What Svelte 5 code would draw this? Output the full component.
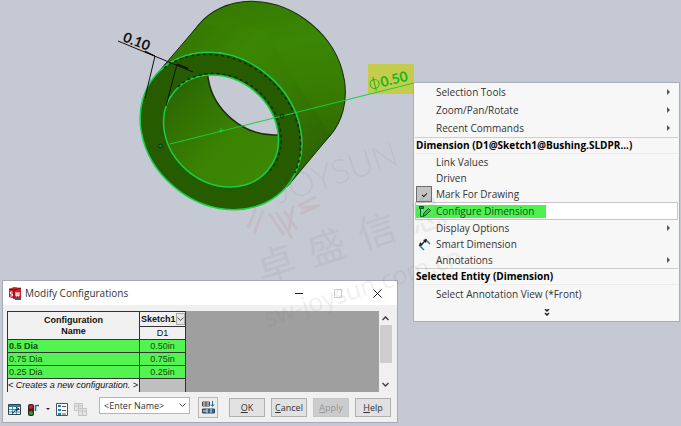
<script lang="ts">
  interface MenuItem {
    label: string;
    submenu?: boolean;
    icon?: 'configure' | 'smart';
    checkable?: boolean;
    active?: boolean;
  }

  const generalItems: MenuItem[] = [
    { label: 'Selection Tools', submenu: true },
    { label: 'Zoom/Pan/Rotate', submenu: true },
    { label: 'Recent Commands', submenu: true }
  ];

  const dimensionItems: MenuItem[] = [
    { label: 'Link Values' },
    { label: 'Driven' },
    { label: 'Mark For Drawing', checkable: true },
    { label: 'Configure Dimension', icon: 'configure', active: true },
    { label: 'Display Options', submenu: true },
    { label: 'Smart Dimension', icon: 'smart' },
    { label: 'Annotations', submenu: true }
  ];

  const configurations = [
    { name: '0.5 Dia', value: '0.50in', current: true },
    { name: '0.75 Dia', value: '0.75in', current: false },
    { name: '0.25 Dia', value: '0.25in', current: false }
  ];

  let markForDrawing = $state(true);
  let viewName = $state('enter');
</script>

{#snippet menuRow(item: MenuItem)}
  {#if item.checkable}
    <label class="menu-item">
      <span class="menu-icon"><input type="checkbox" bind:checked={markForDrawing} /></span>
      <span>{item.label}</span>
    </label>
  {:else}
    <button class="menu-item" class:active={item.active} role="menuitem">
      <span class="menu-target">
        <span class="menu-icon">
          {#if item.icon === 'configure'}
            <svg viewBox="0 0 13 13" width="13" height="13" aria-hidden="true">
              <path d="M1.500 1.500h4v2h-4z" fill="#2b6f8c" stroke="#0d4a3a" />
              <path d="M2.500 4v7.500h2" fill="none" stroke="#0d5a35" />
              <path d="M5 11.500l1-3.500 4.500-4.500 2 2L8 10z" fill="#3fc04f" stroke="#0a4a1c" />
            </svg>
          {:else if item.icon === 'smart'}
            <svg viewBox="0 0 13 13" width="13" height="13" aria-hidden="true">
              <path d="M1 7l5 5M7 1l5 5" stroke="#2b78ad" stroke-width="1.500" />
              <path d="M2.500 7.500l5-5" stroke="#222" stroke-width="1.500" />
              <path d="M1 8l1-4 3 3zM9 1L5 2l3 3z" fill="#222" />
            </svg>
          {/if}
        </span>
        <span>{item.label}</span>
      </span>
      {#if item.submenu}
        <svg class="submenu-arrow" viewBox="0 0 4 6" width="4" height="6" aria-hidden="true">
          <path d="M0 0l3 3-3 3z" fill="#555" />
        </svg>
      {/if}
    </button>
  {/if}
{/snippet}

<main class="viewport">
  <svg class="model" width="420" height="220" viewBox="0 0 420 220" role="img" aria-label="Bushing">
    <defs>
      <linearGradient id="outside" gradientUnits="userSpaceOnUse" x1="190" y1="40" x2="325" y2="145">
        <stop offset="0" stop-color="#357a02" />
        <stop offset="0.300" stop-color="#3b8603" />
        <stop offset="0.600" stop-color="#387d03" />
        <stop offset="1" stop-color="#2e6602" />
      </linearGradient>
      <linearGradient id="bore" gradientUnits="userSpaceOnUse" x1="165" y1="90" x2="260" y2="180">
        <stop offset="0" stop-color="#2b6502" />
        <stop offset="0.600" stop-color="#3a8203" />
        <stop offset="1" stop-color="#3d8704" />
      </linearGradient>
      <clipPath id="front-hole">
        <ellipse cx="221" cy="131" rx="61" ry="52" transform="rotate(40 221 131)" />
      </clipPath>
    </defs>

    <ellipse cx="264.500" cy="80" rx="86" ry="73" transform="rotate(40 264.500 80)" fill="url(#outside)" stroke="#1a2a10" />
    <path d="M155 76L199 24.500L264 30L330 135.500L287 187L221 131z" fill="url(#outside)" />
    <path d="M155 76L199 24.500M330 135.500L287 187" stroke="#1a2a10" />
    <ellipse cx="221" cy="131" rx="86" ry="73" transform="rotate(40 221 131)" fill="#265b00" stroke="#16d04a" stroke-width="1.500" />
    <g clip-path="url(#front-hole)">
      <rect x="150" y="65" width="140" height="130" fill="url(#bore)" />
      <ellipse cx="265" cy="79" rx="61" ry="52" transform="rotate(40 265 79)" fill="#c5c9d4" stroke="#1c2c12" stroke-width="1.500" />
    </g>
    <ellipse cx="221" cy="131" rx="61" ry="52" transform="rotate(40 221 131)" fill="none" stroke="#14cf49" stroke-width="1.500" />
    <path d="M164 68A86 73 40 0 1 295 173" fill="none" stroke="#0c2f0a" stroke-dasharray="3 3" stroke-width="1.500" />
    <path d="M178 87A61 52 40 0 1 267 174" fill="none" stroke="#0c2f0a" stroke-dasharray="3 3" stroke-width="1.500" />

    <!-- wall thickness -->
    <g stroke="#111" fill="#111">
      <path d="M118 41L193 72M155 56L145 98M177 64L166 106" fill="none" />
      <path d="M155 56l-10-5v1zM177 64l11 4v1z" />
    </g>
    <text class="thickness" transform="translate(122 41) rotate(21)">0.10</text>

    <!-- diameter -->
    <rect x="368" y="64" width="46" height="30" fill="#c4cc4d" />
    <path d="M170 144L414 83M221 128v5M219 131l5-1" fill="none" stroke="#17cf3d" />
    <g fill="#0c7d35" stroke="#06340f">
      <circle cx="160.500" cy="146" r="2" />
      <circle cx="282" cy="116" r="2" />
    </g>
    <g transform="translate(371 90) rotate(-14)">
      <circle cx="5" cy="-5" r="4.500" fill="none" stroke="#16b620" />
      <path d="M5 -12V2" stroke="#16b620" />
      <text class="diameter" x="11">0.50</text>
    </g>
  </svg>

  <section class="context-menu" role="menu" aria-label="Dimension menu">
    <div class="group tall">
      {#each generalItems as item}
        {@render menuRow(item)}
      {/each}
    </div>
    <h2>Dimension (D1@Sketch1@Bushing.SLDPR...)</h2>
    <div class="group">
      {#each dimensionItems as item}
        {@render menuRow(item)}
      {/each}
    </div>
    <h2>Selected Entity (Dimension)</h2>
    <div class="group tall">
      {@render menuRow({ label: 'Select Annotation View (*Front)' })}
      <button class="expand" aria-label="Show more">
        <svg viewBox="0 0 6 7" width="6" height="7" aria-hidden="true">
          <path d="M1 0l2 2 2-2M1 4l2 2 2-2" fill="none" stroke="#222" stroke-width="1.500" />
        </svg>
      </button>
    </div>
  </section>

  <section class="dialog" role="dialog" aria-labelledby="dialog-title">
    <header>
      <svg viewBox="0 0 14 14" width="14" height="14" aria-hidden="true">
        <path d="M1 3l5-2 7 1v10l-6 1-6-2z" fill="#c9202b" />
        <path d="M1 3l5 1 7-2M6 4v9" fill="none" stroke="#7d0c14" />
        <path d="M4.500 6H2.500v2h2v2h-2M8 6v4h1V7h1v3h1V6" fill="none" stroke="#fff" />
        <path d="M7 12h6v2H7z" fill="#555" />
      </svg>
      <h1 id="dialog-title">Modify Configurations</h1>
      <div class="window-buttons">
        <button aria-label="Minimize">
          <svg viewBox="0 0 9 9" width="9" height="9"><path d="M0 4.500h8" stroke="#222" /></svg>
        </button>
        <button aria-label="Maximize" disabled>
          <svg viewBox="0 0 9 9" width="9" height="9"><path d="M.5.5h7v8h-7z" fill="none" stroke="#ccc" /></svg>
        </button>
        <button aria-label="Close">
          <svg viewBox="0 0 9 9" width="9" height="9"><path d="M.5.5l8 8M8.500.5l-8 8" stroke="#222" /></svg>
        </button>
      </div>
    </header>

    <div class="grid-area">
      <div class="grid">
        <table>
          <thead>
            <tr>
              <th class="name" rowspan="2">Configuration<br />Name</th>
              <th>
                <div class="sketch">
                  Sketch1
                  <button aria-label="Sketch1 parameters">
                    <svg viewBox="0 0 7 5" width="7" height="5"><path d="M.5.5l3 3 3-3" fill="none" stroke="#555" /></svg>
                  </button>
                </div>
              </th>
            </tr>
            <tr>
              <th class="parameter">D1</th>
            </tr>
          </thead>
          <tbody>
            {#each configurations as config}
              <tr class="filled">
                <td class="name" class:current={config.current}>{config.name}</td>
                <td class="value">{config.value}</td>
              </tr>
            {/each}
            <tr class="create">
              <td class="name">&lt; Creates a new configuration. &gt;</td>
              <td></td>
            </tr>
          </tbody>
        </table>
      </div>
      <div class="scrollbar">
        <svg viewBox="0 0 7 5" width="7" height="5"><path d="M.5 4l3-3 3 3" fill="none" stroke="#444" stroke-width="1.500" /></svg>
        <div class="thumb"></div>
        <svg viewBox="0 0 7 5" width="7" height="5"><path d="M.5 1l3 3 3-3" fill="none" stroke="#444" stroke-width="1.500" /></svg>
      </div>
    </div>

    <footer>
      <div class="tools">
        <button aria-label="Configure table">
          <svg viewBox="0 0 13 13" width="13" height="13">
            <path d="M.5 1.500h12v10H.5z" fill="#eef6fa" stroke="#345" />
            <path d="M1 2h11v2H1z" fill="#2783ad" />
            <path d="M1 6.500h11M1 9h11M4.500 4v7M8.500 4v7" stroke="#3f94ba" />
            <path d="M4 10c3 0 2-4 6-4M8 4l3 2-3 2" fill="none" stroke="#223" />
          </svg>
        </button>
        <button aria-label="Rebuild state">
          <svg viewBox="0 0 13 13" width="13" height="13">
            <rect x="1" y="1" width="6" height="12" rx="2" fill="#3a2420" />
            <circle cx="4" cy="4" r="2" fill="#d32020" />
            <circle cx="4" cy="10" r="2" fill="#20a03a" />
            <path d="M8.500 2v6M9 2.500h3" stroke="#276d91" stroke-width="1.500" />
          </svg>
        </button>
        <button class="caret" aria-label="Rebuild options">
          <svg viewBox="0 0 4 3" width="4" height="3"><path d="M0 0h4L2 2z" fill="#222" /></svg>
        </button>
        <button aria-label="Parameters">
          <svg viewBox="0 0 12 13" width="12" height="13">
            <path d="M.5.5h11v12H.5z" fill="#f6fafc" stroke="#456" />
            <path d="M2 2h3v2H2zM2 6h3v2H2zM2 10h3v2H2z" fill="#1f7fae" />
            <path d="M6 3.500h4M6 7.500h4M6 11h4" stroke="#555" />
          </svg>
        </button>
        <button aria-label="Copy table" disabled>
          <svg viewBox="0 0 13 13" width="13" height="13" fill="#e4e4e4" stroke="#c4c4c4">
            <path d="M.5.5h8v7h-8zM.5 3h8M4.500 1v6" />
            <path d="M4.500 5.500h8v7h-8zM4.500 8h8M8.500 6v6" />
          </svg>
        </button>
      </div>
      <div class="view-select">
        <select bind:value={viewName} aria-label="Table view name">
          <option value="enter">&lt;Enter Name&gt;</option>
        </select>
        <svg viewBox="0 0 7 5" width="7" height="5" aria-hidden="true"><path d="M.5.5l3 3 3-3" fill="none" stroke="#555" /></svg>
      </div>
      <button class="save-view" aria-label="Save table view">
        <svg viewBox="0 0 13 13" width="13" height="13">
          <path d="M.5 1h7v4h-7zM.5 3h7M4 1v4" fill="#fff" stroke="#444" />
          <path d="M10.500 0v5M9 3.500l1.500 2 1.500-2" fill="none" stroke="#1d6f9d" />
          <path d="M.5 8h12v4H.5z" fill="#1d6f9d" stroke="#444" />
          <path d="M1 10h4M5 8v4M9 8v4" stroke="#dfeaf0" />
        </svg>
      </button>
      <div class="actions">
        <button><u>O</u>K</button>
        <button><u>C</u>ancel</button>
        <button disabled><u>A</u>pply</button>
        <button><u>H</u>elp</button>
      </div>
    </footer>
  </section>

  <svg class="watermark" width="500" height="340" viewBox="0 0 500 340" aria-hidden="true">
    <g transform="rotate(-18)">
      <text class="brand" x="202" y="280">JOYSUN</text>
      <text class="hanzi" x="162" y="350">卓</text>
      <text class="hanzi" x="215" y="350">盛</text>
      <text class="hanzi" x="268" y="350">信</text>
      <text class="hanzi" x="321" y="350">息</text>
      <text class="site" x="153" y="394">sw-joysun.com.cn</text>
    </g>
    <path
      class="stripes"
      d="M256 208l-8 20M263 210l-9 24M269 213l15 22M276 212l16 26M284 211l13 18M293 206l-4 24M301 208l16 -2M300 214l20 -9M298 206l18 -9"
    />
  </svg>
</main>

<style>
  :global(body) {
    margin: 0;
    background: #c5c9d4;
  }

  .viewport {
    position: relative;
    min-height: 100vh;
    overflow: hidden;
    background: #c5c9d4;
    font-family: 'Open Sans', 'Noto Sans', sans-serif;
    font-size: 10px;
    color: #333;
  }

  button,
  select {
    margin: 0;
    padding: 0;
    border: none;
    background: none;
    font: inherit;
    color: inherit;
  }

  svg {
    display: block;
    flex: none;
  }

  .thickness {
    font: 700 14px Lato, sans-serif;
    fill: #111;
  }

  .diameter {
    font: 700 14px Lato, sans-serif;
    fill: #16b620;
  }

  .context-menu {
    position: absolute;
    top: 82px;
    left: 413px;
    width: 267px;
    box-sizing: border-box;
    padding: 0 1px;
    border: 1px solid #a9adb5;
    background: #f7f7f7;
  }

  .context-menu h2 {
    margin: 0;
    padding-left: 1px;
    border-top: 1px solid #cfcfcf;
    border-bottom: 1px solid #ececec;
    font-size: 10px;
    line-height: 15px;
    color: #000;
    white-space: nowrap;
  }

  .menu-item {
    display: flex;
    align-items: center;
    justify-content: flex-start;
    width: 100%;
    height: 16px;
    box-sizing: border-box;
    padding-left: 1px;
    text-align: left;
    white-space: nowrap;
  }

  .tall .menu-item,
  .expand {
    height: 18px;
  }

  .menu-target {
    display: flex;
    align-items: center;
  }

  .menu-icon {
    display: flex;
    justify-content: center;
    width: 16px;
    margin-right: 4px;
  }

  .menu-item.active {
    height: 18px;
    padding-left: 0;
    border: 1px solid #c6c6c6;
    background: #fff;
  }

  .active .menu-target {
    height: 13px;
    padding-right: 12px;
    background: #4df24f;
    color: #174d1c;
  }

  .submenu-arrow {
    margin-left: auto;
    margin-right: 7px;
  }

  .menu-icon input {
    display: grid;
    place-items: center;
    appearance: none;
    width: 16px;
    height: 16px;
    margin: 0;
    border: 1px solid #6d6d70;
    background: #c3c3c6;
  }

  .menu-icon input:checked::before {
    content: '';
    width: 2px;
    height: 4px;
    border: solid #222;
    border-width: 0 1px 1px 0;
    transform: rotate(45deg);
  }

  .expand {
    display: flex;
    align-items: center;
    justify-content: center;
    width: 100%;
  }

  .dialog {
    position: absolute;
    top: 280px;
    left: 2px;
    width: 396px;
    box-sizing: border-box;
    border: 1px solid #a5a9b1;
    background: #f0f0f0;
  }

  .dialog header {
    display: flex;
    align-items: center;
    gap: 3px;
    height: 24px;
    padding: 0 15px 0 5px;
    background: #fff;
  }

  h1 {
    margin: 0;
    font-size: 10px;
    font-weight: 400;
  }

  .window-buttons {
    display: flex;
    gap: 30px;
    margin-left: auto;
  }

  .grid-area {
    display: flex;
    padding: 6px 5px 0 4px;
  }

  .grid {
    flex: 1;
    background: #9f9f9f;
    font-family: 'Liberation Sans', Arial, sans-serif;
    font-size: 9px;
    color: #111;
  }

  table {
    border-collapse: collapse;
    table-layout: fixed;
    width: 179px;
  }

  th,
  td {
    height: 13px;
    box-sizing: border-box;
    padding: 0 1px;
    border: 1px solid #333;
    line-height: 11px;
    white-space: nowrap;
  }

  th {
    background: #f0f0f0;
  }

  th.name {
    width: 132px;
  }

  .sketch {
    display: flex;
    align-items: center;
    justify-content: space-between;
    height: 14px;
  }

  .sketch button {
    display: grid;
    place-items: center;
    width: 10px;
    height: 12px;
    border: 1px solid #aaa;
    background: #e4e4e4;
  }

  .parameter {
    font-weight: 400;
  }

  .filled td {
    background: #53f452;
    color: #0c4a10;
  }

  .filled .current {
    font-weight: 700;
  }

  .value {
    text-align: center;
  }

  .create td {
    border-bottom: none;
    background: #bfbfbf;
  }

  .create .name {
    padding: 0;
    background: #f0f0f0;
    font-style: italic;
  }

  .scrollbar {
    display: flex;
    flex-direction: column;
    align-items: center;
    justify-content: space-between;
    width: 13px;
    padding: 5px 0;
    box-sizing: border-box;
  }

  .thumb {
    width: 12px;
    height: 38px;
    margin-bottom: 14px;
    background: #cdcdcd;
  }

  footer {
    display: flex;
    align-items: center;
    padding: 5px 6px 4px 5px;
    font-size: 9px;
  }

  .tools {
    display: flex;
    align-items: center;
    gap: 6px;
    margin: 4px 12px 0 0;
  }

  .view-select {
    display: flex;
    align-items: center;
    align-self: flex-start;
    width: 91px;
    height: 17px;
    box-sizing: border-box;
    padding-right: 3px;
    border: 1px solid #b4b4b4;
    background: #fff;
  }

  .view-select select {
    flex: 1;
    min-width: 0;
    padding-left: 4px;
    appearance: none;
  }

  .save-view {
    display: grid;
    place-items: center;
    width: 20px;
    height: 21px;
    margin-left: 8px;
    border: 1px solid #b9b9b9;
    background: #ececec;
  }

  .actions {
    display: flex;
    gap: 6px;
    margin-left: auto;
  }

  .actions button {
    width: 36px;
    height: 19px;
    border: 1px solid #b0b0b0;
    background: #e1e1e1;
  }

  .actions button:disabled {
    border-color: #c6c6c6;
    background: #cccccc;
    color: #969696;
  }

  .watermark {
    position: absolute;
    top: 0;
    left: 0;
    fill: #777;
    opacity: 0.1;
    pointer-events: none;
  }

  .brand {
    font: 300 34px Lato, sans-serif;
  }

  .hanzi {
    font: 38px 'Noto Sans CJK SC', sans-serif;
  }

  .site {
    font: 25px 'Open Sans', sans-serif;
  }

  .stripes {
    fill: none;
    stroke: #c0504d;
    stroke-width: 3;
  }
</style>
